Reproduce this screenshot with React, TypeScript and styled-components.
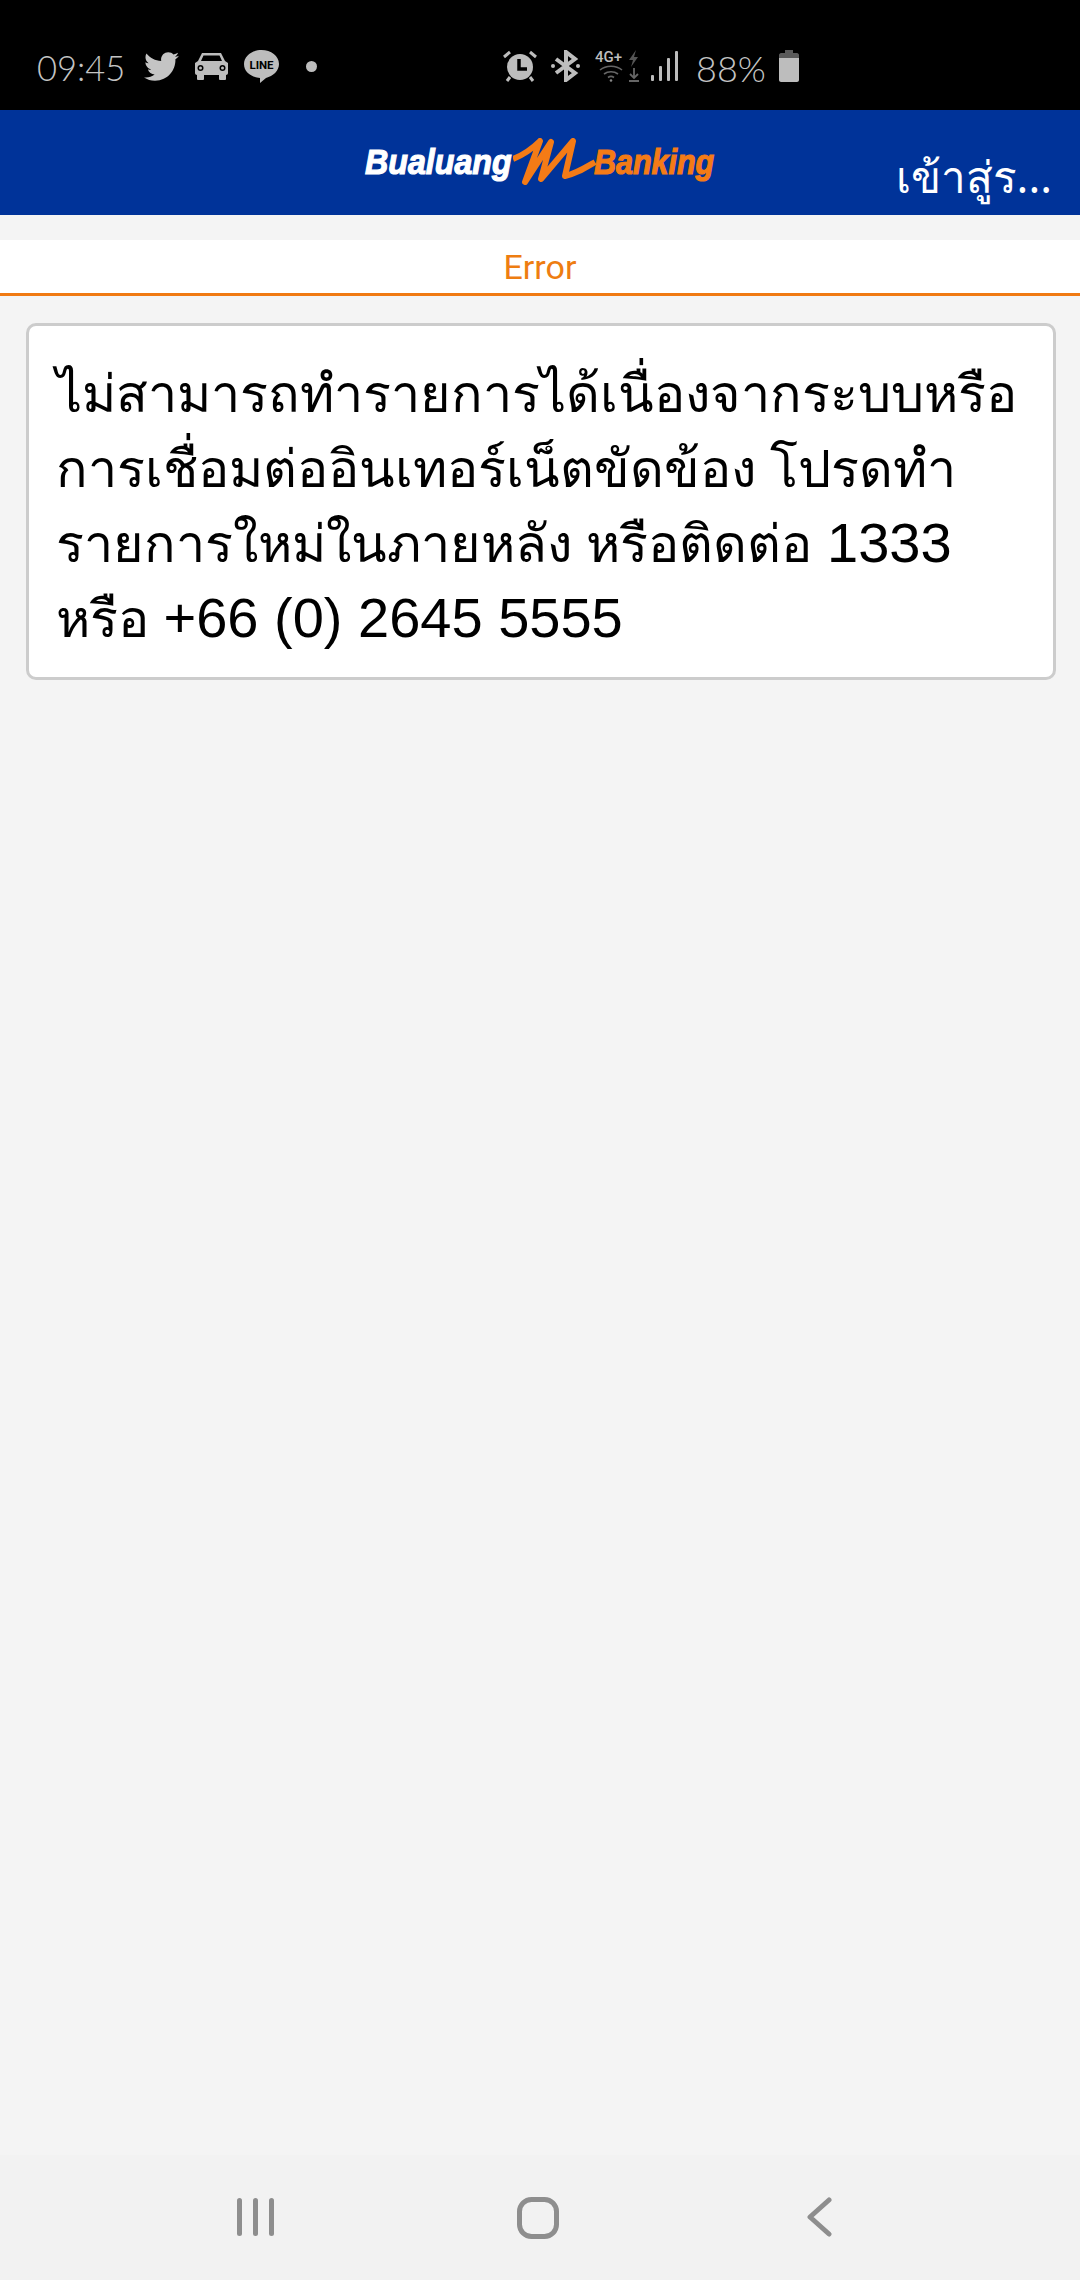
import React from 'react';
import styled, { createGlobalStyle } from 'styled-components';
import { FaTwitter } from 'react-icons/fa';

const GlobalStyle = createGlobalStyle`
  html, body {
    margin: 0;
    padding: 0;
    background: #f4f4f4;
  }
`;

const Screen = styled.div`
  width: 1080px;
  height: 2280px;
  display: flex;
  flex-direction: column;
  background: #f4f4f4;
  font-family: Roboto, "Noto Sans", "Liberation Sans", sans-serif;
  overflow: hidden;
`;

const StatusBar = styled.div`
  height: 110px;
  flex-shrink: 0;
  background: #000;
  color: #c4c4c4;
  display: flex;
  align-items: flex-start;
  padding: 50px 0 0 37px;
  box-sizing: border-box;
`;

const StatusLeft = styled.div`
  width: 466px;
  height: 32px;
  display: flex;
  align-items: center;
`;

const StatusRight = styled.div`
  height: 32px;
  display: flex;
  align-items: center;
`;

const Clock = styled.span`
  width: 107px;
  font-family: Lato, sans-serif;
  font-weight: 300;
  font-size: 34.5px;
  line-height: 36px;
  padding-top: 4px;
`;

const Percent = styled.span`
  width: 83px;
  font-family: Lato, sans-serif;
  font-weight: 300;
  font-size: 36px;
  line-height: 32px;
  padding-top: 3px;
`;

const Slot = styled.span<{ $w: number }>`
  width: ${p => p.$w}px;
  display: flex;
  align-items: center;
`;

const NotifDot = styled.span`
  width: 11px;
  height: 11px;
  border-radius: 50%;
  background: #bdbdbd;
`;

const Header = styled.header`
  height: 105px;
  flex-shrink: 0;
  background: #003399;
  display: grid;
  grid-template-columns: 1fr auto;
`;

const Logo = styled.div`
  margin: 28px 0 0 365px;
  height: 47px;
  display: flex;
  align-items: center;
  font-family: "Liberation Sans", sans-serif;
  font-weight: 700;
  font-style: italic;
  font-size: 35px;
  line-height: 47px;
`;

const LogoWhite = styled.span`
  display: block;
  width: 148px;
  color: #fff;
  -webkit-text-stroke: 1.2px #fff;
  transform: scaleX(0.92);
  transform-origin: left center;
  white-space: nowrap;
`;

const LogoOrange = styled.span`
  display: block;
  width: 122px;
  margin-left: -4px;
  color: #f47b16;
  -webkit-text-stroke: 1.2px #f47b16;
  transform: scaleX(0.87);
  transform-origin: left center;
  white-space: nowrap;
`;

const SignIn = styled.div`
  color: #fff;
  font-size: 44px;
  line-height: 52px;
  padding: 40px 28px 0 0;
  font-family: "Noto Sans", Roboto, sans-serif;
`;

const TitleBar = styled.div`
  margin-top: 25px;
  height: 53px;
  flex-shrink: 0;
  background: #fff;
  border-bottom: 3px solid #f07a12;
  color: #ee7d11;
  font-size: 34px;
  line-height: 55px;
  text-align: center;
`;

const Content = styled.main`
  flex: 1;
  padding: 27px 24px 0 26px;
`;

const MessageCard = styled.div`
  background: #fff;
  border: 3px solid #cccccc;
  border-radius: 10px;
  padding: 31px 23px 0 27px;
  height: 357px;
  box-sizing: border-box;
  color: #000;
  font-size: 52.15px;
  line-height: 75px;
  font-family: "Liberation Sans", "Noto Sans", "DejaVu Sans", sans-serif;
`;

const Latin = styled.span`
  font-size: 56px;
  line-height: 1;
`;

const NavBar = styled.nav`
  height: 125px;
  flex-shrink: 0;
  background: #f2f2f2;
  display: flex;
  align-items: flex-start;
  padding: 42px 0 0 237px;
  box-sizing: border-box;
`;

const NavSlot = styled.span<{ $w: number }>`
  width: ${p => p.$w}px;
  display: block;
  line-height: 0;
`;

const Car = () => (
  <svg width="35" height="28" viewBox="0 0 35 28" fill="#bdbdbd">
    <path d="M8 1h19l4 8 3 2v10c0 1-1 2-2 2H3c-1 0-2-1-2-2V11l3-2zM9.500 3.500 7 9h21l-2.500-5.500z" fillRule="evenodd" />
    <rect x="3" y="22" width="7" height="6" rx="1" />
    <rect x="25" y="22" width="7" height="6" rx="1" />
    <circle cx="6.500" cy="16" r="3" fill="#000" />
    <circle cx="6.500" cy="16" r="1.500" />
    <circle cx="28.500" cy="16" r="3" fill="#000" />
    <circle cx="28.500" cy="16" r="1.500" />
  </svg>
);

const LineBubble = () => (
  <svg width="35" height="33" viewBox="0 0 35 33">
    <path d="M17.500 0C27 0 35 6 35 14c0 7-6 12-13 14l-6 5v-5C7 27 0 22 0 14 0 6 8 0 17.500 0z" fill="#bdbdbd" />
    <text x="17.500" y="19" textAnchor="middle" fontSize="11.500" fontWeight="700" fontFamily="Roboto, sans-serif" fill="#000">LINE</text>
  </svg>
);

const AlarmClock = () => (
  <svg width="34" height="32" viewBox="0 0 34 32">
    <circle cx="17" cy="17" r="13" fill="#bdbdbd" />
    <path d="M16 9v10h8" stroke="#000" strokeWidth="3.500" fill="none" />
    <path d="M1 7l6-5M33 7l-6-5" stroke="#bdbdbd" strokeWidth="3" />
    <path d="M7 27l-3 4M27 27l3 4" stroke="#bdbdbd" strokeWidth="3" />
  </svg>
);

const Bluetooth = () => (
  <svg width="29" height="32" viewBox="0 0 29 32" fill="none">
    <path d="M5 9l19 14-9 7V2l9 7L5 23" stroke="#bdbdbd" strokeWidth="4" />
    <circle cx="2" cy="16" r="2" fill="#bdbdbd" />
    <circle cx="27" cy="16" r="2" fill="#bdbdbd" />
  </svg>
);

const NetworkIcon = () => (
  <svg width="45" height="32" viewBox="0 0 45 32">
    <text x="0" y="12" fontSize="15" fontWeight="500" fontFamily="Roboto, sans-serif" fill="#bdbdbd">4G+</text>
    <path d="M5 20c6-5 16-5 22 0M9 24c4-3 10-3 14 0M13 27.500c2-1.500 4-1.500 6 0" stroke="#666" strokeWidth="1.600" fill="none" />
    <circle cx="16" cy="30.500" r="1.300" fill="#888" />
    <path d="M41 0l-7 10h4l-2 7 7-10h-4z" fill="#555" />
    <path d="M39 18v10M35 24l4 4 4-4M34 31h10" stroke="#666" strokeWidth="1.800" fill="none" />
  </svg>
);

const Signal = () => (
  <svg width="27" height="32" viewBox="0 0 27 32" fill="#bdbdbd">
    <rect x="0" y="25" width="3" height="6" rx="1" />
    <rect x="8" y="16" width="3" height="15" rx="1" />
    <rect x="16" y="8" width="3" height="23" rx="1" />
    <rect x="24" y="1" width="3" height="30" rx="1" />
  </svg>
);

const Battery = () => (
  <svg width="20" height="32" viewBox="0 0 20 32">
    <path d="M6 0h8v3h4c1 0 2 1 2 2v3H0V5c0-1 1-2 2-2h4z" fill="#5a5a5a" />
    <path d="M0 8h20v22c0 1-1 2-2 2H2c-1 0-2-1-2-2z" fill="#bdbdbd" />
  </svg>
);

const RecentsIcon = () => (
  <svg width="39" height="40" viewBox="0 0 39 40" fill="#8e8e8e">
    <rect x="0" y="1" width="5" height="38" rx="2.500" />
    <rect x="16" y="1" width="5" height="38" rx="2.500" />
    <rect x="32" y="1" width="5" height="38" rx="2.500" />
  </svg>
);

const HomeIcon = () => (
  <svg width="42" height="42" viewBox="0 0 42 42" fill="none">
    <rect x="2.500" y="2.500" width="37" height="37" rx="12" stroke="#8e8e8e" strokeWidth="5" />
  </svg>
);

const BackIcon = () => (
  <svg width="26" height="40" viewBox="0 0 26 40" fill="none">
    <path d="M23 3L4 20l19 17" stroke="#8e8e8e" strokeWidth="5" strokeLinecap="round" strokeLinejoin="round" />
  </svg>
);

const App: React.FC = () => {
  return (
    <Screen>
      <GlobalStyle />
      <StatusBar>
        <StatusLeft>
          <Clock>09:45</Clock>
          <Slot $w={50}><FaTwitter size={35} /></Slot>
          <Slot $w={50}><Car /></Slot>
          <Slot $w={62}><LineBubble /></Slot>
          <NotifDot />
        </StatusLeft>
        <StatusRight>
          <Slot $w={48}><AlarmClock /></Slot>
          <Slot $w={44}><Bluetooth /></Slot>
          <Slot $w={56}><NetworkIcon /></Slot>
          <Slot $w={45}><Signal /></Slot>
          <Percent>88%</Percent>
          <Slot $w={20}><Battery /></Slot>
        </StatusRight>
      </StatusBar>

      <Header>
        <Logo>
          <LogoWhite>Bualuang</LogoWhite>
          <svg width="85" height="47" viewBox="0 0 85 47" fill="none">
            <path
              d="M0 21C10 17 18 12 27 3L12 44 38 4 28 41 60 3 52 38C62 36 70 31 82 24"
              stroke="#f47b16"
              strokeWidth="6"
              strokeLinejoin="round"
            />
          </svg>
          <LogoOrange>Banking</LogoOrange>
        </Logo>
        <SignIn>เข้าสู่ร...</SignIn>
      </Header>

      <TitleBar>Error</TitleBar>

      <Content>
        <MessageCard>
          ไม่สามารถทำรายการได้เนื่องจากระบบหรือการเชื่อมต่ออินเทอร์เน็ตขัดข้อง โปรดทำรายการใหม่ในภายหลัง หรือติดต่อ <Latin>1333</Latin> หรือ <Latin>+66 (0) 2645 5555</Latin>
        </MessageCard>
      </Content>

      <NavBar>
        <NavSlot $w={280}><RecentsIcon /></NavSlot>
        <NavSlot $w={289}><HomeIcon /></NavSlot>
        <NavSlot $w={26}><BackIcon /></NavSlot>
      </NavBar>
    </Screen>
  );
};

export default App;
